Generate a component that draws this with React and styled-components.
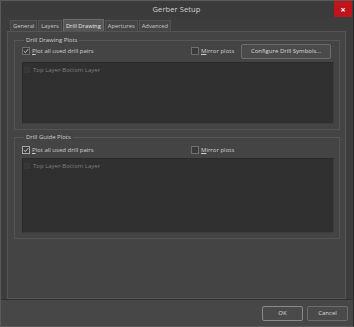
import React from "react";
import styled, { createGlobalStyle } from "styled-components";

const Global = createGlobalStyle`
  html, body { margin: 0; padding: 0; background: #3a3a3a; }
  * { box-sizing: border-box; }
`;

const Window = styled.div`
  width: 354px;
  height: 327px;
  background: #3d3d3d;
  border: 1px solid #5a5a5a;
  border-right-color: #2a2a2a;
  display: flex;
  flex-direction: column;
  font-family: "Open Sans", "DejaVu Sans", sans-serif;
  color: #cfcfcf;
  overflow: hidden;
`;

const TitleBar = styled.div`
  height: 16px;
  display: grid;
  grid-template-columns: 18px 1fr 18px;
  align-items: center;
  background: #3b3b3b;
  margin-right: 1px;
`;

const Title = styled.div`
  grid-column: 2;
  text-align: center;
  font-size: 7.5px;
  color: #d2d2d2;
  letter-spacing: 0.1px;
`;

const Close = styled.div`
  grid-column: 3;
  height: 16px;
  background: #c0141b;
  color: #fff;
  font-size: 9px;
  font-weight: bold;
  display: flex;
  align-items: center;
  justify-content: center;
  line-height: 1;
`;

const Body = styled.div`
  flex: 1;
  display: flex;
  flex-direction: column;
  padding: 2px 7px 0 6px;
`;

const Tabs = styled.div`
  display: flex;
  gap: 1px;
  padding-left: 3px;
  height: 12px;
  align-items: flex-end;
`;

const Tab = styled.div`
  height: ${(p) => (p.$active ? "12px" : "11px")};
  padding: 0 2px;
  font-size: 5.8px;
  display: flex;
  align-items: center;
  background: ${(p) => (p.$active ? "#575757" : "#454545")};
  border: 1px solid ${(p) => (p.$active ? "#6a6a6a" : "#525252")};
  border-bottom: none;
  color: ${(p) => (p.$active ? "#e6e6e6" : "#c8c8c8")};
  white-space: nowrap;
`;

const Panel = styled.div`
  height: 268px;
  background: #444444;
  border: 1px solid #555;
  padding: 4px 5px 0 6px;
  display: flex;
  flex-direction: column;
  gap: 3px;
`;

const Group = styled.fieldset`
  margin: 0;
  border: 1px solid #545454;
  border-top-color: #575757;
  padding: 0 5px 5px 7px;
  min-width: 0;
  display: flex;
  flex-direction: column;
`;

const Legend = styled.legend`
  font-size: 6px;
  padding: 0 2px;
  margin-left: 2px;
  color: #d0d0d0;
  line-height: 8px;
`;

const Row = styled.div`
  display: flex;
  align-items: center;
  height: ${(p) => p.$h || 14}px;
  margin-top: ${(p) => p.$mt || 0}px;
`;

const CheckLabel = styled.label`
  display: flex;
  align-items: center;
  gap: 2px;
  font-size: 6px;
  width: ${(p) => p.$w}px;
  flex: none;
  color: #cfcfcf;
  white-space: nowrap;
`;

const Box = styled.span`
  width: 8px;
  height: 8px;
  border: 1px solid ${(p) => (p.$focus ? "#a9a9a9" : "#6e6e6e")};
  background: #3a3a3a;
  display: flex;
  align-items: center;
  justify-content: center;
  flex: none;
`;

const U = styled.span`
  text-decoration: underline;
`;

const Button = styled.div`
  height: 15px;
  width: ${(p) => p.$w}px;
  border: 1px solid ${(p) => (p.$strong ? "#8a8a8a" : "#6d6d6d")};
  border-radius: 2px;
  background: #4a4a4a;
  font-size: 6px;
  color: #dcdcdc;
  display: flex;
  align-items: center;
  justify-content: center;
  white-space: nowrap;
`;

const List = styled.div`
  height: ${(p) => p.$h}px;
  margin-top: ${(p) => p.$mt}px;
  background: #303030;
  border: 1px solid #2a2a2a;
  border-right-color: #3c3c3c;
  border-bottom-color: #3c3c3c;
  padding: 2px 0 0 1px;
`;

const Item = styled.div`
  display: flex;
  align-items: center;
  gap: 3px;
  height: 9px;
  font-size: 6px;
  color: #7d7d7d;
`;

const ItemBox = styled.span`
  width: 6px;
  height: 6px;
  background: #363636;
  border: 1px solid #393939;
`;

const Footer = styled.div`
  height: 29px;
  margin-top: auto;
  background: #474747;
  border-top: 1px solid #333;
  display: flex;
  align-items: center;
  justify-content: flex-end;
  gap: 4px;
  padding: 0 5px 0 0;
`;

const Check = () => (
  <svg width="6" height="6" viewBox="0 0 6 6">
    <path d="M0.8 3.1 L2.4 4.6 L5.2 1.2" fill="none" stroke="#d8d8d8" strokeWidth="0.9" />
  </svg>
);

function GroupBlock({ title, focus, showButton, listH, listMt, rowMt }) {
  return (
    <Group>
      <Legend>{title}</Legend>
      <Row $mt={rowMt}>
        <CheckLabel $w={169}>
          <Box $focus={focus}><Check /></Box>
          <span><U>P</U>lot all used drill pairs</span>
        </CheckLabel>
        <CheckLabel $w={50}>
          <Box />
          <span><U>M</U>irror plots</span>
        </CheckLabel>
        {showButton && <Button $w={90}>Configure Drill Symbols...</Button>}
      </Row>
      <List $h={listH} $mt={listMt}>
        <Item>
          <ItemBox />
          <span>Top Layer-Bottom Layer</span>
        </Item>
      </List>
    </Group>
  );
}

export default function App() {
  return (
    <>
      <Global />
      <Window>
        <TitleBar>
          <Title>Gerber Setup</Title>
          <Close>×</Close>
        </TitleBar>
        <Body>
          <Tabs>
            <Tab>General</Tab>
            <Tab>Layers</Tab>
            <Tab $active>Drill Drawing</Tab>
            <Tab>Apertures</Tab>
            <Tab>Advanced</Tab>
          </Tabs>
          <Panel>
            <GroupBlock title="Drill Drawing Plots" showButton listH={62} listMt={4} rowMt={0} />
            <GroupBlock title="Drill Guide Plots" focus listH={75} listMt={1} rowMt={2} />
          </Panel>
        </Body>
        <Footer>
          <Button $w={41} $strong>OK</Button>
          <Button $w={41}>Cancel</Button>
        </Footer>
      </Window>
    </>
  );
}
